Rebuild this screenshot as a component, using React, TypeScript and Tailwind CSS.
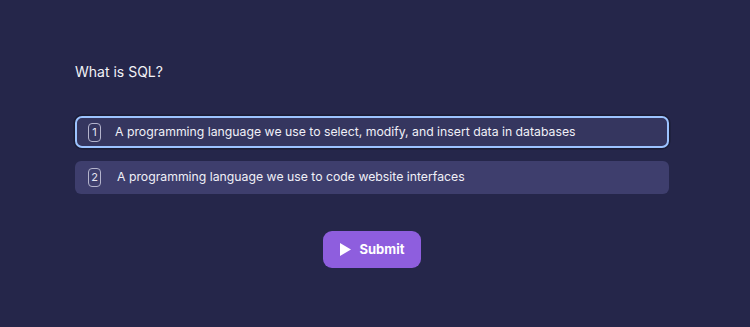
export default function App() {
  const options = [
    'A programming language we use to select, modify, and insert data in databases',
    'A programming language we use to code website interfaces',
  ]
  return (
    <div
      className="w-[750px] h-[327px] bg-[#25264a] text-white overflow-hidden"
      style={{ fontFamily: 'Inter, "Noto Sans", sans-serif' }}
    >
      <div className="ml-[75px] w-[594px] pt-[62px]">
        <h1 className="text-[14px] leading-[20px] text-[#f2f2f7]">What is SQL?</h1>

        <div className="mt-[34px] flex flex-col gap-[12px]">
          {options.map((opt, i) => (
            <div
              key={i}
              className={
                i === 0
                  ? 'h-[32px] rounded-[7px] border-2 border-[#9cc3ff] bg-[#35365f] flex items-center pl-[11px] shadow-[0_0_0_1.5px_#1b1c35]'
                  : 'h-[33px] mt-[1px] rounded-[6px] bg-[#3e3e6d] flex items-center pl-[13px]'
              }
            >
              <span className="w-[13px] h-[19px] rounded-[4px] border border-[#b4b4cc] flex items-center justify-center text-[11px] leading-none text-[#e5e5f0]">
                {i + 1}
              </span>
              <span className={'text-[12.25px] text-[#f0f0f7] ' + (i === 0 ? 'ml-[14px]' : 'ml-[16px]')}>
                {opt}
              </span>
            </div>
          ))}
        </div>

        <div className="mt-[37px] flex justify-center">
          <button className="w-[98px] h-[37px] rounded-[9px] bg-[#8e5ede] flex items-center justify-center gap-[9px] text-[13px] font-bold text-white">
            <svg width="11" height="13" viewBox="0 0 11 13">
              <path d="M0 0 L11 6.5 L0 13 Z" fill="white" />
            </svg>
            Submit
          </button>
        </div>
      </div>
    </div>
  )
}
